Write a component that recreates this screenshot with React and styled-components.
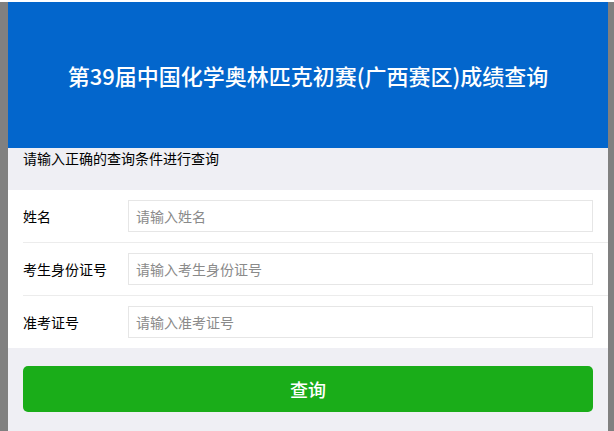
import React from 'react';
import styled, { createGlobalStyle } from 'styled-components';

const GlobalStyle = createGlobalStyle`
  html, body {
    margin: 0;
    padding: 0;
    background: #fff;
  }
  body {
    font-family: "Noto Sans CJK SC", "Noto Sans", sans-serif;
  }
  * {
    box-sizing: border-box;
  }
`;

// fields shown in the query form
const fields = [
  { id: 'name', label: '姓名', placeholder: '请输入姓名' },
  { id: 'idcard', label: '考生身份证号', placeholder: '请输入考生身份证号' },
  { id: 'ticket', label: '准考证号', placeholder: '请输入准考证号' },
];

const App = () => {
  return (
    <Shell>
      <GlobalStyle />
      <Frame>
        <Page>
          {/* title banner */}
          <Header>
            <Title>第39届中国化学奥林匹克初赛(广西赛区)成绩查询</Title>
          </Header>
          <Hint>请输入正确的查询条件进行查询</Hint>
          {/* form rows */}
          <Form>
            {fields.map((field, index) => {
              return (
                <Row key={field.id} $first={index === 0}>
                  <Label htmlFor={field.id}>{field.label}</Label>
                  <Input id={field.id} type="text" placeholder={field.placeholder} />
                </Row>
              );
            })}
          </Form>
          <Actions>
            <Button type="button">查询</Button>
          </Actions>
        </Page>
      </Frame>
    </Shell>
  );
};

const Shell = styled.div`
  min-height: 100vh;
  padding-top: 2px;
  background: #fff;
  display: flex;
  flex-direction: column;
`;

const Frame = styled.div`
  flex: 1;
  display: flex;
  background: #808080;
  padding: 0 6px 0 8px;
`;

const Page = styled.div`
  flex: 1;
  background: #efeff4;
  display: flex;
  flex-direction: column;
`;

const Header = styled.header`
  height: 146px;
  background: #0366cc;
  display: flex;
  align-items: center;
  justify-content: center;
`;

const Title = styled.h1`
  margin: 0;
  color: #fff;
  font-size: 22px;
  font-weight: 500;
  letter-spacing: 0;
`;

const Hint = styled.div`
  height: 42px;
  padding: 0 15px;
  line-height: 20px;
  font-size: 14px;
  color: #000;
`;

const Form = styled.div`
  background: #fff;
`;

const Row = styled.div`
  display: flex;
  align-items: center;
  margin-left: 15px;
  padding: 10px 15px 10px 0;
  border-top: ${(props) => (props.$first ? 'none' : '1px solid #ececec')};
`;

const Label = styled.label`
  width: 105px;
  flex-shrink: 0;
  font-size: 14px;
  color: #000;
`;

const Input = styled.input`
  flex: 1;
  height: 32px;
  border: 1px solid #e6e6e6;
  padding: 0 7px;
  font-family: inherit;
  font-size: 14px;
  color: #333;
  outline: none;
  &::placeholder {
    color: #8a8a8a;
  }
`;

const Actions = styled.div`
  padding: 18px 15px 20px;
`;

const Button = styled.button`
  display: block;
  width: 100%;
  height: 46px;
  border: none;
  border-radius: 5px;
  background: #1aad19;
  color: #fff;
  font-family: inherit;
  font-size: 18px;
  font-weight: 500;
  cursor: pointer;
`;

export default App;
